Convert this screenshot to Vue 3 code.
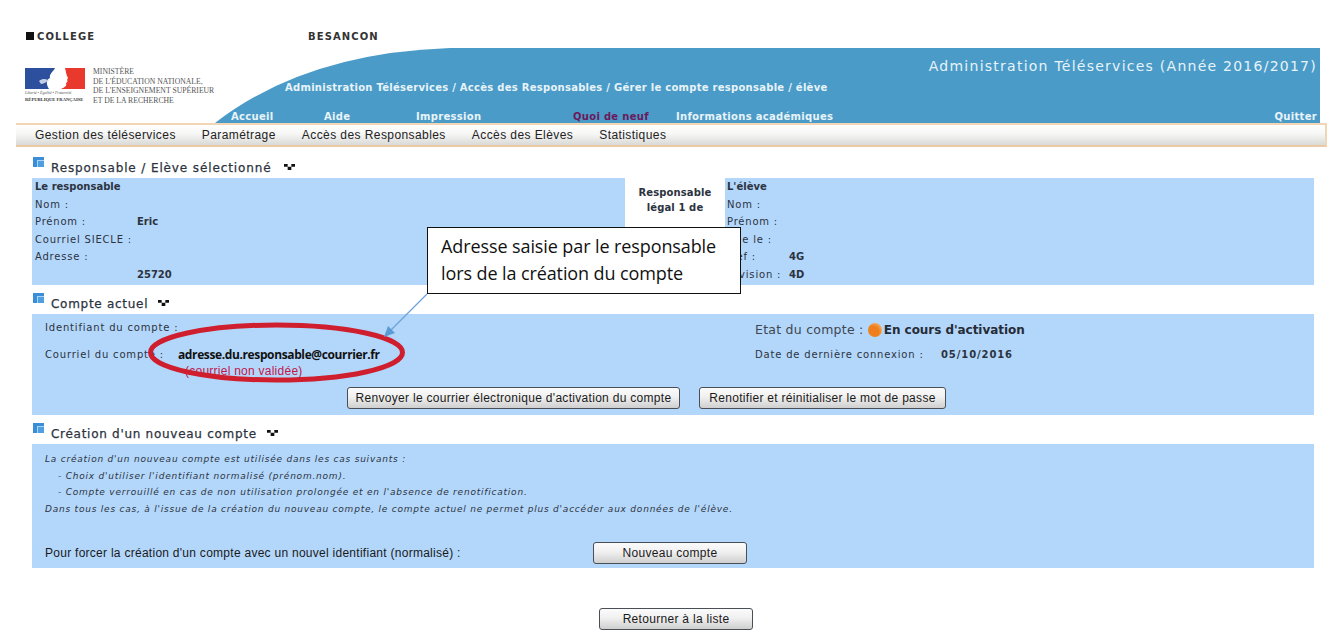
<script setup>
const respRows = [
  { label: 'Nom :', value: '' },
  { label: 'Prénom :', value: 'Eric' },
  { label: 'Courriel SIECLE :', value: '' },
  { label: 'Adresse :', value: '' },
  { label: '', value: '25720' }
]
const eleveRows = [
  { label: 'Nom :', value: '' },
  { label: 'Prénom :', value: '' },
  { label: 'Née le :', value: '' },
  { label: 'Mef :', value: '4G' },
  { label: 'Division :', value: '4D' }
]
const nav = ['Gestion des téléservices', 'Paramétrage', 'Accès des Responsables', 'Accès des Elèves', 'Statistiques']
</script>

<template>
  <div class="page">
    <div class="topline">
      <span class="sq"></span><span class="college">COLLEGE</span><span class="city">BESANCON</span>
    </div>
    <header class="header">
      <div class="logo">
        <div class="marianne">
          <svg width="60" height="21" viewBox="0 0 60 21">
            <rect width="60" height="21" fill="#fff" />
            <path d="M0 0H30C28 4 24 6 25 10C21 12 21 16 24 21H0Z" fill="#2c4f9e" />
            <path d="M40 0H60V21H36C40 19 42 18 41 15C44 14 41 12 43 10C41 7 41 3 40 0Z" fill="#e8392c" />
            <path d="M14 13C18 10 22 11 24 13C21 13 20 16 16 16Z" fill="#c3cfe6" />
          </svg>
          <div class="devise">Liberté • Égalité • Fraternité</div>
          <div class="rf">RÉPUBLIQUE FRANÇAISE</div>
        </div>
        <div class="ministere">MINISTÈRE<br />DE L'ÉDUCATION NATIONALE,<br />DE L'ENSEIGNEMENT SUPÉRIEUR<br />ET DE LA RECHERCHE</div>
      </div>
      <div class="banner">
        <div class="banner-title">Administration Téléservices (Année 2016/2017)</div>
        <div class="crumb">Administration Téléservices / Accès des Responsables / Gérer le compte responsable / élève</div>
        <div class="links">
          <span class="l1">Accueil</span>
          <span class="l2">Aide</span>
          <span class="l3">Impression</span>
          <span class="l4">Quoi de neuf</span>
          <span class="l5">Informations académiques</span>
          <span class="l6">Quitter</span>
        </div>
      </div>
    </header>
    <nav class="nav">
      <span v-for="n in nav" :key="n">{{ n }}</span>
    </nav>

    <main class="main">
      <h2 class="title first"><i class="ico"></i>Responsable / Elève sélectionné<svg class="tog" width="11" height="6" viewBox="0 0 12 6.500"><path d="M0 0h4v3H0zM8 0h4v3H8zM4 3h4v3.500H4z" fill="#111" /></svg></h2>
      <section class="sel">
        <div class="box left">
          <div class="head">Le responsable</div>
          <div class="row" v-for="(r, i) in respRows" :key="i"><span class="lab">{{ r.label }}</span><b>{{ r.value }}</b></div>
        </div>
        <div class="legal">Responsable<br />légal 1 de</div>
        <div class="box right">
          <div class="head">L'élève</div>
          <div class="row" v-for="(r, i) in eleveRows" :key="i"><span class="lab short">{{ r.label }}</span><b>{{ r.value }}</b></div>
        </div>
      </section>

      <h2 class="title"><i class="ico"></i>Compte actuel<svg class="tog" width="11" height="6" viewBox="0 0 12 6.500"><path d="M0 0h4v3H0zM8 0h4v3H8zM4 3h4v3.500H4z" fill="#111" /></svg></h2>
      <section class="box compte">
        <div class="cols">
          <div class="cl">
            <div class="id">Identifiant du compte :</div>
            <div class="mail"><span class="mlab">Courriel du compte :</span><b>adresse.du.responsable@courrier.fr</b></div>
            <div class="nv">(courriel non validée)</div>
          </div>
          <div class="cr">
            <div class="etat">Etat du compte : <i class="dot"></i><b>En cours d'activation</b></div>
            <div class="date"><span>Date de dernière connexion :</span><b>05/10/2016</b></div>
          </div>
        </div>
        <div class="btns">
          <button class="btn b1">Renvoyer le courrier électronique d'activation du compte</button>
          <button class="btn b2">Renotifier et réinitialiser le mot de passe</button>
        </div>
      </section>

      <h2 class="title"><i class="ico"></i>Création d'un nouveau compte<svg class="tog" width="11" height="6" viewBox="0 0 12 6.500"><path d="M0 0h4v3H0zM8 0h4v3H8zM4 3h4v3.500H4z" fill="#111" /></svg></h2>
      <section class="box creation">
        <p>La création d'un nouveau compte est utilisée dans les cas suivants :</p>
        <p class="ind">- Choix d'utiliser l'identifiant normalisé (prénom.nom).</p>
        <p class="ind">- Compte verrouillé en cas de non utilisation prolongée et en l'absence de renotification.</p>
        <p>Dans tous les cas, à l'issue de la création du nouveau compte, le compte actuel ne permet plus d'accéder aux données de l'élève.</p>
        <div class="force"><span>Pour forcer la création d'un compte avec un nouvel identifiant (normalisé) :</span><button class="btn b3">Nouveau compte</button></div>
      </section>

      <div class="back"><button class="btn b4">Retourner à la liste</button></div>
    </main>

    <svg class="annot" width="1338" height="640" viewBox="0 0 1338 640">
      <ellipse cx="276.500" cy="352.500" rx="126" ry="27.500" fill="none" stroke="#cf1f2e" stroke-width="5" />
      <path d="M427 294L390 331" stroke="#6fa3d8" stroke-width="1.200" fill="none" />
      <path d="M384 337L388 326L395 333Z" fill="#5b9bd5" />
    </svg>
    <div class="callout">Adresse saisie par le responsable<br />lors de la création du compte</div>
  </div>
</template>

<style>
html, body { margin: 0; background: #fff; }
</style>

<style scoped>
.page { position: relative; width: 1338px; height: 640px; overflow: hidden; font-family: "DejaVu Sans", Verdana, sans-serif; color: #2c3340; }
.topline { display: flex; align-items: center; height: 48px; padding: 24px 0 0 26px; box-sizing: border-box; font-size: 10px; font-weight: 700; letter-spacing: 1.100px; color: #333; }
.sq { width: 8px; height: 8px; background: #111; margin-right: 3px; }
.college { width: 271px; }
.header { display: flex; height: 75px; margin-left: 16px; width: 1304px; }
.logo { width: 199px; flex: none; display: flex; padding: 20px 0 0 9px; box-sizing: border-box; }
.marianne { width: 60px; flex: none; height: 38px; margin-right: 8px; }
.marianne svg { display: block; margin-bottom: 1px; }
.devise { font: italic 4px/6px "Liberation Serif", serif; color: #555; white-space: nowrap; }
.rf { font: 700 4.600px/7px "Liberation Serif", serif; color: #333; white-space: nowrap; }
.ministere { font: 7.700px/9.500px "Liberation Serif", serif; color: #555; white-space: nowrap; margin-top: -1px; }
.banner { position: relative; flex: 1; background: #4a9bc8; clip-path: path("M0 75Q90 5 235 0L1105 0L1105 75Z"); color: #e8f3f8; font-weight: 700; }
.banner-title { position: absolute; right: 3px; top: 10px; font-size: 14px; font-weight: 400; letter-spacing: 1.250px; white-space: nowrap; }
.crumb { position: absolute; left: 70px; top: 34px; font-size: 10px; letter-spacing: .27px; white-space: nowrap; }
.links { position: absolute; left: 0; right: 0; bottom: 0; height: 15px; font-size: 10px; line-height: 17px; letter-spacing: .3px; }
.links span { position: absolute; top: 0; white-space: nowrap; }
.l1 { left: 16px; } .l2 { left: 109px; } .l3 { left: 201px; }
.l4 { left: 358px; color: #6a1a5c; } .l5 { left: 461px; } .l6 { right: 3px; }
.nav { display: flex; height: 24px; margin-left: 16px; width: 1311px; box-sizing: border-box; border: 2px solid #f2d5b5; border-left: 0; border-bottom-color: #edc9a4; padding-left: 19px; align-items: center; background: linear-gradient(#fff 0%, #f6f6f5 45%, #d9d9d6 100%); font: 12px "Liberation Sans", Arial, sans-serif; color: #222; gap: 26px; }
.nav span { letter-spacing: .42px; white-space: nowrap; }
.main { padding: 0 24px 0 32px; }
.title { position: relative; display: flex; align-items: center; height: 20px; margin: 0; padding-left: 19px; font-size: 12px; font-weight: 400; letter-spacing: .72px; color: #2c3340; -webkit-text-stroke: .25px #2c3340; margin-top: 9px; }
.title.first { margin-top: 11px; letter-spacing: .88px; }
.ico { position: absolute; left: 1px; top: -1px; width: 11px; height: 10px; background:
  linear-gradient(#3a8ed6, #3a8ed6) 0 0 / 100% 3px no-repeat,
  linear-gradient(#3a8ed6, #3a8ed6) 0 0 / 4px 100% no-repeat,
  linear-gradient(#4f9fe0, #4f9fe0) 5px 4px / 6px 6px no-repeat,
  #a8d4f5; }
.tog { margin: -3px 0 0 10px; }
.title.first .tog { margin-left: 13px; }
.sel { display: flex; height: 107px; font-size: 10px; }
.box { background: #b3d7fb; }
.left { width: 593px; box-sizing: border-box; padding: 0 3px; }
.right { flex: 1; padding: 0 2px; }
.legal { width: 100px; text-align: center; font-weight: 700; letter-spacing: .12px; line-height: 15px; padding-top: 7px; color: #2c3340; }
.head { font-weight: 700; height: 17.500px; line-height: 18px; }
.row { display: flex; height: 17.500px; line-height: 18px; letter-spacing: .8px; }
.lab { width: 102px; flex: none; }
.lab.short { width: 62px; }
.row b { letter-spacing: 0; }
.compte { height: 101px; margin-top: 0; padding-left: 13px; position: relative; font-size: 10px; letter-spacing: .82px; }
.cols { display: flex; height: 73px; }
.cl { width: 710px; flex: none; padding-top: 7px; }
.id { line-height: 13px; }
.mail { display: flex; margin-top: 14px; line-height: 14px; }
.mlab { width: 133px; flex: none; white-space: nowrap; }
.mail b { font: 700 12px/14px "Open Sans", sans-serif; letter-spacing: -.38px; color: #111; }
.nv { font: 12px/13px "Liberation Sans", Arial, sans-serif; color: #c0174a; letter-spacing: .25px; padding-left: 140px; margin-top: 3px; }
.cr { padding-top: 8px; }
.etat { font-size: 12.500px; line-height: 16px; display: flex; align-items: center; white-space: pre; letter-spacing: .25px; color: #3f4650; }
.etat b { color: #262c36; font-size: 12px; letter-spacing: -.05px; }
.dot { width: 14px; height: 14px; border-radius: 50%; background: radial-gradient(circle at 35% 65%, #ee7f1c 45%, #f6c88f 100%); margin: 0 2px 0 0; }
.date { margin-top: 10px; line-height: 13px; display: flex; }
.date span { width: 186px; white-space: nowrap; }
.date b { letter-spacing: .9px; }
.btns { display: flex; }
.btn { display: block; box-sizing: border-box; height: 22px; padding: 0; border: 1px solid #4a4f55; border-radius: 3px; background: linear-gradient(#fbfbfb, #f0f0f0 45%, #cfcfcf); font: 12px "Liberation Sans", Arial, sans-serif; letter-spacing: .3px; color: #1a1a1a; white-space: nowrap; }
.b1 { width: 333px; margin-left: 302px; }
.b2 { width: 247px; margin-left: 19px; }
.b3 { width: 154px; }
.b4 { width: 154px; margin-left: 567px; }
.creation { height: 124px; padding: 7px 0 0 13px; box-sizing: border-box; font-size: 9px; font-style: italic; letter-spacing: .78px; position: relative; }
.creation p { margin: 0; height: 16.500px; line-height: 16px; white-space: nowrap; }
.creation .ind { padding-left: 13px; }
.force { position: absolute; left: 13px; top: 98px; display: flex; align-items: center; font: 12px "Liberation Sans", Arial, sans-serif; font-style: normal; color: #1a1a1a; letter-spacing: .27px; }
.force span { width: 548px; white-space: nowrap; }
.back { margin-top: 40px; }
.annot { position: absolute; left: 0; top: 0; pointer-events: none; }
.callout { position: absolute; left: 427px; top: 227px; width: 314px; height: 67px; box-sizing: border-box; border: 1px solid #111; background: #fff; padding: 5px 0 0 13px; font: 18px/27px "Open Sans", sans-serif; letter-spacing: -.1px; color: #111; white-space: nowrap; }
</style>
